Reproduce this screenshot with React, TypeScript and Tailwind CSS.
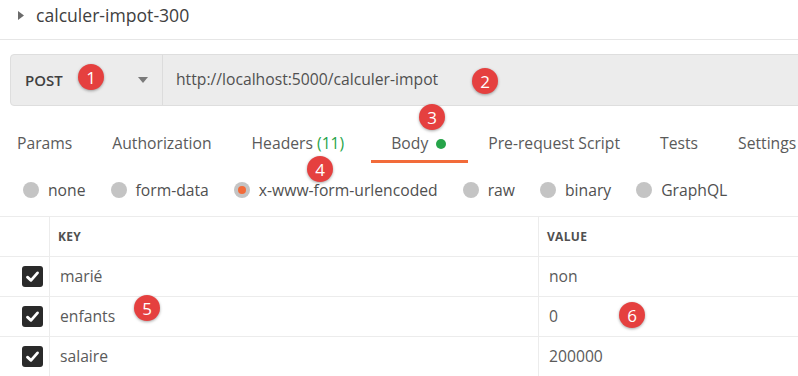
import React from "react";

const Badge = ({ n, x, y }: { n: number; x: number; y: number }) => (
  <div
    className="absolute w-[26px] h-[26px] rounded-full bg-[#e5403f] text-white flex items-center justify-center text-[17px] leading-none shadow-[0_1px_3px_rgba(0,0,0,0.35)]"
    style={{ left: x - 13, top: y - 13, fontFamily: "'Open Sans', sans-serif" }}
  >
    {n}
  </div>
);

const Check = () => (
  <div className="w-[21px] h-[21px] rounded-[3px] bg-[#2a2a2a] flex items-center justify-center">
    <svg width="15" height="15" viewBox="0 0 14 14">
      <path d="M2.3 7.6 L5.6 10.6 L11.7 3.6" fill="none" stroke="white" strokeWidth="2.6" strokeLinecap="round" strokeLinejoin="round" />
    </svg>
  </div>
);

const Radio = ({ label, selected }: { label: string; selected?: boolean }) => (
  <div className="flex items-center gap-[9px]">
    <div className="w-[16px] h-[16px] rounded-full bg-[#c4c4c4] flex items-center justify-center">
      {selected && <div className="w-[8px] h-[8px] rounded-full bg-[#f26b3a]" />}
    </div>
    <span>{label}</span>
  </div>
);

export default function App() {
  const rows = [
    ["marié", "non"],
    ["enfants", "0"],
    ["salaire", "200000"],
  ];
  return (
    <div
      className="relative w-[798px] h-[376px] overflow-hidden bg-white text-[#505050]"
      style={{ fontFamily: "'Open Sans', sans-serif" }}
    >
      {/* Title */}
      <div className="h-[40px] border-b border-[#e6e6e6] flex items-center pl-[18px] pb-[8px]">
        <svg width="7" height="9" viewBox="0 0 7 9" className="mr-[11px]">
          <path d="M0 0 L6 4.5 L0 9 Z" fill="#6b6b6b" />
        </svg>
        <span className="text-[17.6px] text-[#404040]">calculer-impot-300</span>
      </div>

      {/* Request bar */}
      <div className="mt-[14px] ml-[10px] w-[820px] h-[52px] flex bg-[#ececec] border border-[#dedede] rounded-l-[4px]">
        <div className="w-[152px] border-r border-[#dcdcdc] flex items-center pl-[14px] pr-[14px] justify-between">
          <span className="text-[15px] font-semibold text-[#404040]">POST</span>
          <svg width="10" height="6" viewBox="0 0 10 6">
            <path d="M0 0 L10 0 L5 6 Z" fill="#7a7a7a" />
          </svg>
        </div>
        <div className="flex items-center pl-[13px] text-[15.7px] text-[#505050]">
          http://localhost:5000/calculer-impot
        </div>
      </div>

      {/* Tabs */}
      <div className="h-[57px] flex items-end pl-[17px] text-[15.7px] text-[#5a5a5a] whitespace-nowrap">
        <div className="pb-[7px] mr-[40px]">Params</div>
        <div className="pb-[7px] mr-[40px]">Authorization</div>
        <div className="pb-[7px] mr-[27px]">
          Headers <span className="text-[#26a449]">(11)</span>
        </div>
        <div className="mr-[20px] flex flex-col">
          <div className="flex items-center pl-[20px] pr-[22px]">
            Body
            <span className="ml-[8px] w-[10px] h-[10px] rounded-full bg-[#26a449] inline-block" />
          </div>
          <div className="mt-[4px] h-[3px] bg-[#f26b3a]" />
        </div>
        <div className="pb-[7px] mr-[40px]">Pre-request Script</div>
        <div className="pb-[7px] mr-[40px]">Tests</div>
        <div className="pb-[7px]">Settings</div>
      </div>

      {/* Radios */}
      <div className="h-[53px] pt-[2px] flex items-center pl-[23px] gap-[25px] text-[15.7px] text-[#505050] whitespace-nowrap">
        <Radio label="none" />
        <Radio label="form-data" />
        <Radio label="x-www-form-urlencoded" selected />
        <Radio label="raw" />
        <Radio label="binary" />
        <Radio label="GraphQL" />
      </div>

      {/* Table */}
      <div className="border-t border-[#ececec]">
        <div className="flex h-[40px] border-b border-[#ececec]">
          <div className="w-[50px] border-r border-[#ececec]" />
          <div className="w-[489px] border-r border-[#ececec] flex items-center pl-[8px] text-[12px] font-bold text-[#505050] tracking-[0.3px]">
            KEY
          </div>
          <div className="flex-1 flex items-center pl-[8px] text-[12px] font-bold text-[#505050] tracking-[0.3px]">
            VALUE
          </div>
        </div>
        {rows.map(([k, v]) => (
          <div key={k} className="flex h-[40px] border-b border-[#ececec]">
            <div className="w-[50px] border-r border-[#ececec] flex items-center justify-end pr-[6px]">
              <Check />
            </div>
            <div className="w-[489px] border-r border-[#ececec] flex items-center pl-[10px] text-[15.7px] text-[#5a5a5a]">
              {k}
            </div>
            <div className="flex-1 flex items-center pl-[10px] text-[15.7px] text-[#5a5a5a]">{v}</div>
          </div>
        ))}
      </div>

      <Badge n={1} x={91} y={77} />
      <Badge n={2} x={485} y={81} />
      <Badge n={3} x={432} y={117} />
      <Badge n={4} x={320} y={169} />
      <Badge n={5} x={147} y={308} />
      <Badge n={6} x={632} y={315} />
    </div>
  );
}
